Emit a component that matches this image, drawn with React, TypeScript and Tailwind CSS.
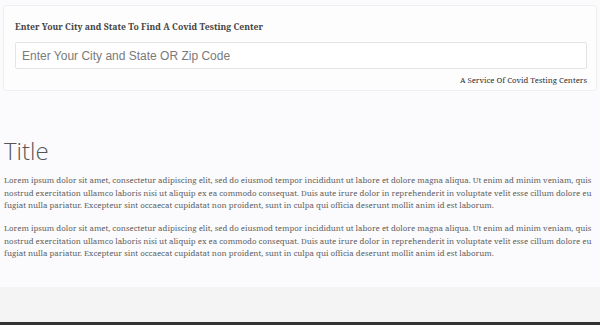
const lorem =
  'Lorem ipsum dolor sit amet, consectetur adipiscing elit, sed do eiusmod tempor incididunt ut labore et dolore magna aliqua. Ut enim ad minim veniam, quis nostrud exercitation ullamco laboris nisi ut aliquip ex ea commodo consequat. Duis aute irure dolor in reprehenderit in voluptate velit esse cillum dolore eu fugiat nulla pariatur. Excepteur sint occaecat cupidatat non proident, sunt in culpa qui officia deserunt mollit anim id est laborum.';

const serif = "font-['Noto_Serif','DejaVu_Serif',serif]";

export default function App() {
  return (
    <div className="w-[600px] h-[325px] bg-[#fbfbfd] flex flex-col overflow-hidden">
      <div className="px-[3px] pt-[5px]">
        <div className="border border-[#eeeef0] bg-[#fdfdfe] rounded-[2px] pl-[11px] pr-[9px] pt-[15px] pb-[5px]">
          <h3 className={`${serif} text-[8.7px] font-bold text-[#444] leading-[12px]`}>
            Enter Your City and State To Find A Covid Testing Center
          </h3>
          <input
            type="text"
            placeholder="Enter Your City and State OR Zip Code"
            className="mt-[9px] w-full h-[27px] border border-[#e4e4e6] rounded-[2px] bg-white px-[6px] font-['Liberation_Sans',Arial,sans-serif] text-[12px] text-[#555] placeholder:text-[#7a7a7a] outline-none"
          />
          <p className={`${serif} text-right text-[7.8px] text-[#333] leading-[10px] mt-[6px]`}>
            A Service Of Covid Testing Centers
          </p>
        </div>
      </div>

      <div className="px-[4px] pt-[46px] flex-1">
        <h1 className="font-['Open_Sans','Noto_Sans',sans-serif] font-light text-[24px] leading-[28px] text-[#555]">
          Title
        </h1>
        <p className={`${serif} mt-[9px] text-[7.9px] leading-[12.5px] text-[#5f5f5f]`}>{lorem}</p>
        <p className={`${serif} mt-[10.5px] text-[7.9px] leading-[12.5px] text-[#5f5f5f]`}>{lorem}</p>
      </div>

      <div className="h-[38px] bg-[#f4f4f5] border-b-[3px] border-[#333]" />
    </div>
  );
}
